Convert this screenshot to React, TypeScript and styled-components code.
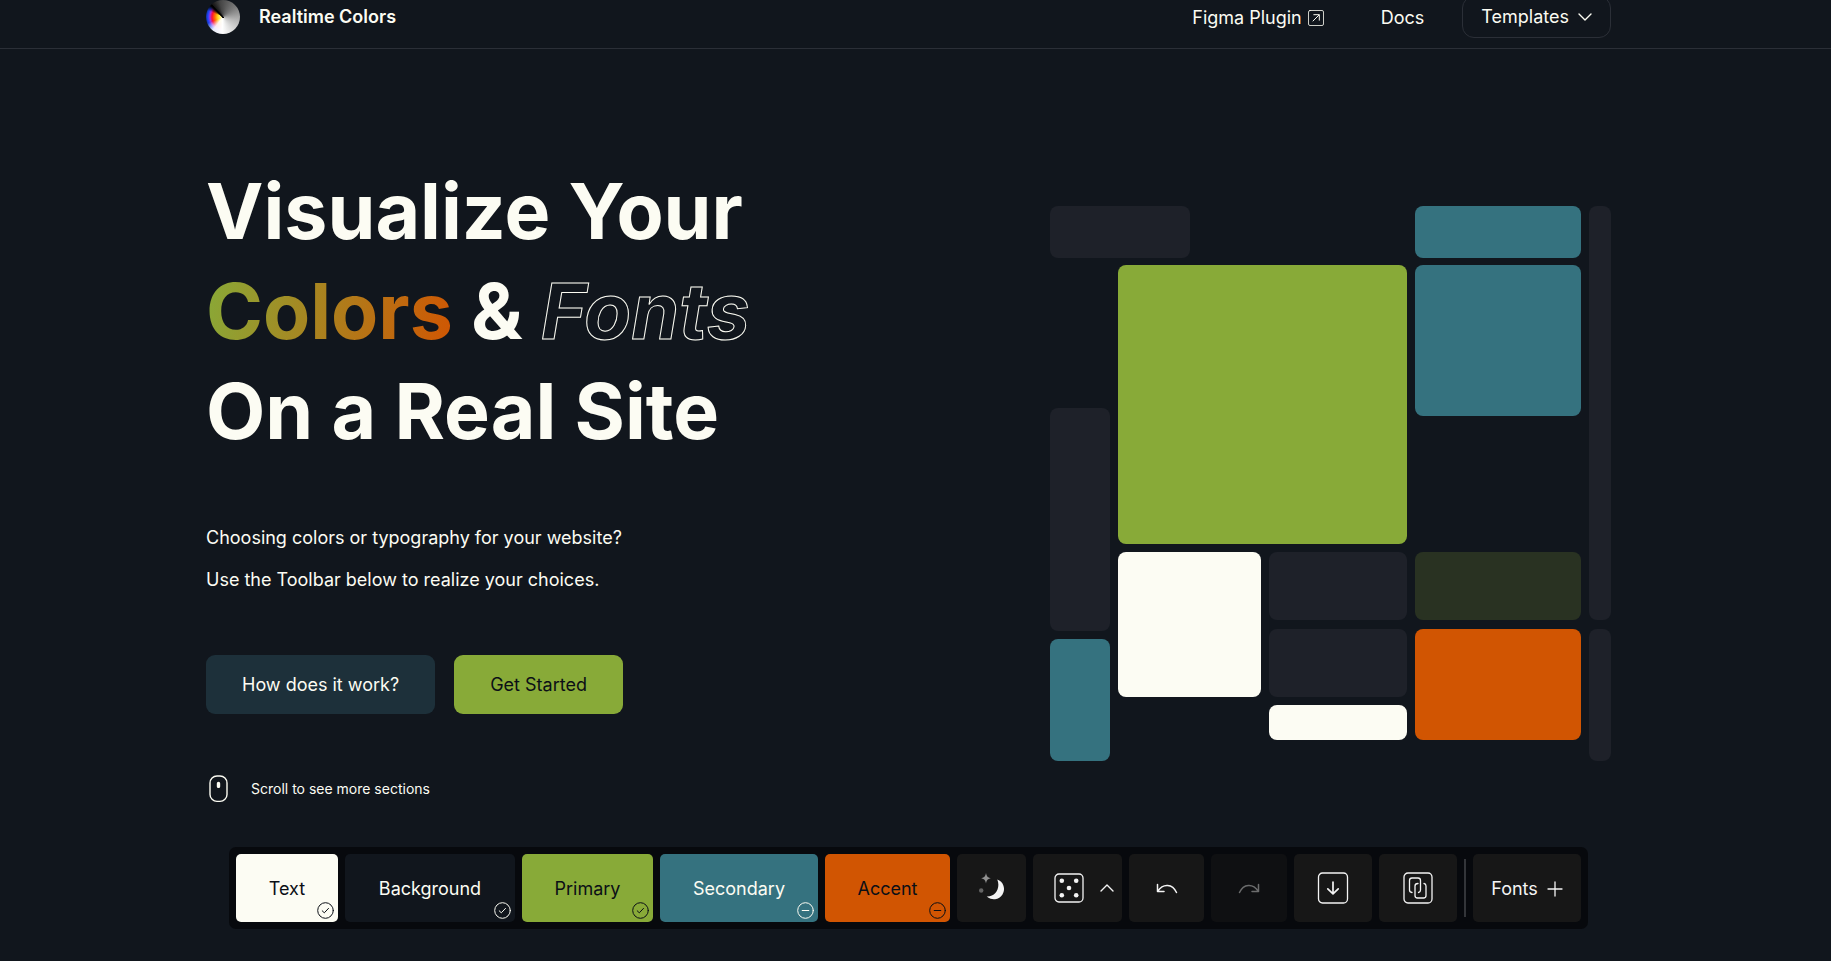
import React from "react";
import styled, { createGlobalStyle, css } from "styled-components";

const c = {
  text: "#fcfcf3",
  background: "#11161d",
  primary: "#88aa38",
  secondary: "#35727f",
  accent: "#d15502",
  muted: "#1e2129",
  line: "#2b2f37",
  ink: "#0b0f16",
};

const Global = createGlobalStyle`
  *, *::before, *::after { box-sizing: border-box; }
  body {
    margin: 0;
    background: ${c.background};
    color: ${c.text};
    font-family: Inter, "Liberation Sans", sans-serif;
    font-size: 18px;
    line-height: 24px;
  }
  button, a { font: inherit; color: inherit; text-decoration: none; }
  button { border: 0; margin: 0; cursor: pointer; }
  svg { display: block; flex: none; }
`;

const Page = styled.div`
  display: flex;
  flex-direction: column;
  min-height: 100vh;
`;

const Header = styled.header`
  border-bottom: 1px solid ${c.line};
  padding-right: 14px;
`;

const Wrap = styled.div`
  width: calc(100% - 48px);
  max-width: 1405px;
  margin: 0 auto;
`;

const Nav = styled(Wrap)`
  display: flex;
  justify-content: space-between;
  align-items: flex-start;
  height: 48px;
`;

const Brand = styled.a`
  display: flex;
  align-items: center;
  gap: 19px;
  height: 34px;
  font-weight: 600;
`;

const Logo = styled.span`
  width: 34px;
  height: 34px;
  border-radius: 50%;
  background:
    linear-gradient(
      47deg,
      transparent 47%,
      #000 49%,
      #000 52%,
      transparent 55%
    ) 0 0 / 18px 18px no-repeat,
    conic-gradient(
      from 318deg,
      #111 0deg,
      #444 30deg,
      #777 90deg,
      #bbb 150deg,
      #fff 225deg,
      rgba(255, 255, 255, 0.9) 260deg,
      rgba(255, 255, 255, 0) 290deg,
      rgba(0, 0, 0, 0) 335deg,
      #000 355deg
    ),
    radial-gradient(circle, #fff 0, #fd2 5px, #f70 8px, #f13 11px, #a3d 13px, #24f 15px, #139 17px);
`;

const Links = styled.nav`
  display: flex;
  align-items: flex-start;
`;

const NavLink = styled.a`
  display: flex;
  gap: 6px;
  align-items: center;
  height: 35px;
  margin-right: 57px;

  & + & { margin-right: 38px; }
`;

const TemplatesButton = styled.button`
  display: flex;
  align-items: center;
  gap: 9px;
  height: 42px;
  margin-top: -4px;
  padding: 0 18px;
  border: 1px solid ${c.line};
  border-radius: 12px;
  background: transparent;
`;

const Main = styled.main`
  flex: 1;
  padding-right: 14px;
`;

const Hero = styled(Wrap)`
  display: flex;
  justify-content: space-between;
  align-items: flex-start;
`;

const Copy = styled.div`
  padding-top: 112px;
`;

const Title = styled.h1`
  margin: 0;
  font-size: 77px;
  line-height: 100px;
  font-weight: 700;
`;

const Gradient = styled.span`
  background: linear-gradient(100deg, ${c.primary}, ${c.accent});
  -webkit-background-clip: text;
  background-clip: text;
  color: transparent;
`;

const Outlined = styled.em`
  color: transparent;
  -webkit-text-stroke: 1px ${c.text};
`;

const Lead = styled.p`
  margin: 56px 0 0;
  line-height: 42px;
`;

const Actions = styled.div`
  display: flex;
  gap: 19px;
  margin-top: 54px;
`;

const Action = styled.button<{ $main?: boolean }>`
  height: 59px;
  padding: 0 36px;
  border-radius: 9px;
  background: ${(p) => (p.$main ? c.primary : "#1d303a")};
  color: ${(p) => (p.$main ? c.ink : c.text)};
`;

const ScrollHint = styled.div`
  display: flex;
  align-items: center;
  gap: 22px;
  margin-top: 61px;
  padding-left: 2px;
  font-size: 14px;
`;

const Mosaic = styled.div`
  display: grid;
  width: 40%;
  max-width: 561px;
  margin-top: 157px;
  grid-template-columns: 60fr 8fr 72fr 71fr 8fr 138fr 8fr 166fr 8fr 22fr;
  grid-template-rows: 52px 7px 143px 8px 128px 8px 68px 9px 2px 8px 58px 8px 35px 21px;
`;

const Tile = styled.div<{ $area: string; $color: string }>`
  grid-area: ${(p) => p.$area};
  background: ${(p) => p.$color};
  border-radius: 8px;
`;

const Dock = styled.div`
  padding-right: 14px;
`;

const Toolbar = styled.div`
  display: flex;
  gap: 7px;
  width: max-content;
  margin: 0 auto 32px;
  padding: 7px;
  border-radius: 7px;
  background: #07090d;
`;

const toolBase = css`
  display: flex;
  align-items: center;
  justify-content: center;
  height: 68px;
  padding: 0;
  border-radius: 5px;
`;

const Swatch = styled.button<{ $bg: string; $fg: string; $width: number }>`
  ${toolBase}
  position: relative;
  padding-top: 2px;
  width: ${(p) => p.$width}px;
  background: ${(p) => p.$bg};
  color: ${(p) => p.$fg};

  svg { position: absolute; right: 4px; bottom: 3px; }
`;

const Tool = styled.button<{ $width: number }>`
  ${toolBase}
  width: ${(p) => p.$width}px;
  background: #171717;
  color: #f4f4f4;

  &:disabled {
    background: #0f1012;
    color: #6b6c6d;
  }
`;

const DiceTool = styled(Tool)`
  gap: 16px;
  padding-left: 13px;
`;

const FontsTool = styled(Tool)`
  gap: 9px;
  padding-top: 2px;
`;

const Divider = styled.span`
  width: 2px;
  margin: 5px 0;
  background: #333539;
`;

const tiles: [string, string][] = [
  ["1 / 1 / 2 / 4", c.muted],
  ["1 / 8 / 2 / 9", c.secondary],
  ["1 / 10 / 8 / 11", c.muted],
  ["3 / 3 / 6 / 7", c.primary],
  ["3 / 8 / 5 / 9", c.secondary],
  ["4 / 1 / 10 / 2", c.muted],
  ["7 / 3 / 12 / 5", c.text],
  ["7 / 6 / 8 / 7", c.muted],
  ["7 / 8 / 8 / 9", "#293222"],
  ["9 / 6 / 12 / 7", c.muted],
  ["9 / 8 / 14 / 9", c.accent],
  ["9 / 10 / 15 / 11", c.muted],
  ["11 / 1 / 15 / 2", c.secondary],
  ["13 / 6 / 14 / 7", c.text],
];

const swatches = [
  { label: "Text", bg: c.text, fg: c.ink, width: 102, ok: true },
  { label: "Background", bg: c.background, fg: c.text, width: 170, ok: true },
  { label: "Primary", bg: c.primary, fg: c.ink, width: 131, ok: true },
  { label: "Secondary", bg: c.secondary, fg: c.text, width: 158, ok: false },
  { label: "Accent", bg: c.accent, fg: c.ink, width: 125, ok: false },
];

const stroke = {
  fill: "none",
  stroke: "currentColor",
  strokeLinecap: "round" as const,
  strokeLinejoin: "round" as const,
};

const Status = ({ ok }: { ok: boolean }) => (
  <svg width="17" height="17" viewBox="0 0 17 17" {...stroke} aria-hidden="true">
    <circle cx="8.5" cy="8.5" r="7.8" />
    <path d={ok ? "M5.2 8.8l2.1 2 4.2-4.4" : "M5.2 8.5h6.6"} />
  </svg>
);

const External = () => (
  <svg width="16" height="16" viewBox="0 0 16 16" {...stroke} aria-hidden="true">
    <rect x="0.5" y="0.5" width="15" height="15" rx="1.5" opacity=".8" />
    <path d="M5 11l6-6M5.800 4.700h5.500V10.200" />
  </svg>
);

const Chevron = ({ up }: { up?: boolean }) => (
  <svg width="14" height="8" viewBox="0 0 14 8" {...stroke} strokeWidth="1.4" aria-hidden="true">
    <path d={up ? "M1 7l6-6 6 6" : "M1 1l6 6 6-6"} />
  </svg>
);

const Mouse = () => (
  <svg width="21" height="28" viewBox="0 0 21 28" {...stroke} strokeWidth="1.4" aria-hidden="true">
    <rect x="2" y="1" width="17" height="25.4" rx="7" />
    <rect x="9.5" y="7.4" width="2" height="5" rx="1" fill="currentColor" />
  </svg>
);

const Moon = () => (
  <svg width="28" height="30" viewBox="0 0 28 30" fill="currentColor" aria-hidden="true">
    <path d="M19.3 6.4a10.3 10.3 0 1 1-10.6 17.2C18 24 22.6 14.5 19.3 6.4z" />
    <path d="M8 0c.8 3.600 1.600 4.400 5 5.200-3.400.8-4.200 1.600-5 5.200-.8-3.600-1.600-4.400-5-5.200C6.400 4.400 7.200 3.600 8 0z" opacity=".55" />
    <circle cx="3.2" cy="17.5" r="2.2" opacity=".35" />
  </svg>
);

const Dice = () => (
  <svg width="30" height="30" viewBox="0 0 30 30" {...stroke} aria-hidden="true">
    <rect x="1" y="1" width="28" height="28" rx="4" strokeWidth="1.3" />
    <g fill="currentColor" stroke="none">
      <circle cx="7.8" cy="7.8" r="2.3" />
      <circle cx="22.2" cy="7.8" r="2.3" />
      <circle cx="15" cy="15" r="2.3" />
      <circle cx="7.8" cy="22.2" r="2.3" />
      <circle cx="22.2" cy="22.2" r="2.3" />
    </g>
  </svg>
);

const Undo = () => (
  <svg width="22" height="11" viewBox="0 0 22 11" {...stroke} strokeWidth="1.5" aria-hidden="true">
    <path d="M1.5 1.5V8.500H8M1.800 8.200C7 0 16.500 .5 20.500 9.500" />
  </svg>
);

const Redo = () => (
  <svg width="22" height="11" viewBox="0 0 22 11" {...stroke} strokeWidth="1.5" aria-hidden="true">
    <path d="M20.5 1.5V8.500H14M20.200 8.200C15 0 5.500 .5 1.500 9.500" />
  </svg>
);

const Export = () => (
  <svg width="32" height="32" viewBox="0 0 32 32" {...stroke} strokeWidth="1.3" aria-hidden="true">
    <rect x="1.5" y="1" width="29" height="30" rx="4" />
    <path d="M16 10v11.500M10.800 16.800l5.200 5 5.200-5" strokeWidth="1.7" />
  </svg>
);

const CopyIcon = () => (
  <svg width="30" height="32" viewBox="0 0 30 32" {...stroke} strokeWidth="1.3" aria-hidden="true">
    <rect x="1" y="1" width="28" height="30" rx="4" />
    <path d="M9 20.500C7.500 20.300 6.500 19.500 6.500 18V8.500C6.500 7 7.500 6 9 6h6c1.500 0 2.500 1 2.500 2.500v9.500c0 1.500-.8 2.300-2 2.500" />
    <path d="M15 11.500c-2 0-3 1-3 2.500v9.500c0 1.500 1 2.500 2.500 2.500h6c1.500 0 2.500-1 2.500-2.500V14c0-1.500-.8-2.300-2-2.500" />
  </svg>
);

const Plus = () => (
  <svg width="16" height="16" viewBox="0 0 16 16" {...stroke} strokeWidth="1.3" aria-hidden="true">
    <path d="M8 1v14M1 8h14" />
  </svg>
);

export default function App() {
  return (
    <Page>
      <Global />
      <Header>
        <Nav>
          <Brand href="#home">
            <Logo />
            Realtime Colors
          </Brand>
          <Links>
            <NavLink href="#figma">
              Figma Plugin <External />
            </NavLink>
            <NavLink href="#docs">Docs</NavLink>
            <TemplatesButton type="button">
              Templates <Chevron />
            </TemplatesButton>
          </Links>
        </Nav>
      </Header>
      <Main>
        <Hero>
          <Copy>
            <Title>
              Visualize Your
              <br />
              <Gradient>Colors</Gradient> &amp; <Outlined>Fonts</Outlined>
              <br />
              On a Real Site
            </Title>
            <Lead>
              Choosing colors or typography for your website?
              <br />
              Use the Toolbar below to realize your choices.
            </Lead>
            <Actions>
              <Action type="button">How does it work?</Action>
              <Action type="button" $main>
                Get Started
              </Action>
            </Actions>
            <ScrollHint>
              <Mouse />
              Scroll to see more sections
            </ScrollHint>
          </Copy>
          <Mosaic>
            {tiles.map(([area, color]) => (
              <Tile key={area} $area={area} $color={color} />
            ))}
          </Mosaic>
        </Hero>
      </Main>
      <Dock>
        <Toolbar role="toolbar" aria-label="Color tools">
          {swatches.map((s) => (
            <Swatch key={s.label} type="button" $bg={s.bg} $fg={s.fg} $width={s.width}>
              {s.label}
              <Status ok={s.ok} />
            </Swatch>
          ))}
          <Tool type="button" aria-label="Toggle theme" $width={69}>
            <Moon />
          </Tool>
          <DiceTool type="button" aria-label="Randomize" $width={89}>
            <Dice />
            <Chevron up />
          </DiceTool>
          <Tool type="button" aria-label="Undo" $width={75}>
            <Undo />
          </Tool>
          <Tool type="button" aria-label="Redo" $width={76} disabled>
            <Redo />
          </Tool>
          <Tool type="button" aria-label="Export" $width={78}>
            <Export />
          </Tool>
          <Tool type="button" aria-label="Copy link" $width={78}>
            <CopyIcon />
          </Tool>
          <Divider />
          <FontsTool type="button" $width={108}>
            Fonts <Plus />
          </FontsTool>
        </Toolbar>
      </Dock>
    </Page>
  );
}
